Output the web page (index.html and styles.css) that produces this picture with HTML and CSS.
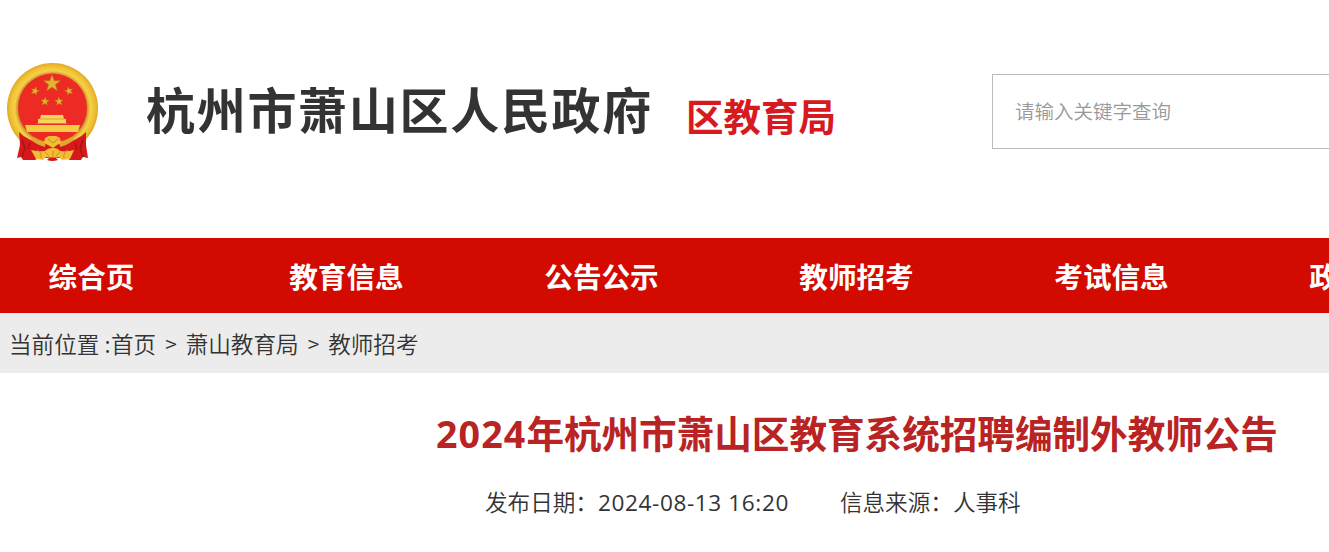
FILE: index.html
```html
<!DOCTYPE html>
<html lang="zh-CN">
<head>
    <meta charset="UTF-8">
    <title>2024年杭州市萧山区教育系统招聘编制外教师公告</title>
    <link rel="stylesheet" href="styles.css">
</head>
<body>

    <div class="header">
        <svg class="emblem" width="94" height="102" viewBox="0 0 94 102">
            <defs>
                <radialGradient id="gold">
                    <stop offset="0.76" stop-color="#c9932a"/>
                    <stop offset="0.83" stop-color="#f7d048"/>
                    <stop offset="0.92" stop-color="#f0c234"/>
                    <stop offset="1" stop-color="#dfaa28"/>
                </radialGradient>
                <path id="star" d="M0-10 2.4-3.1 9.5-3.1 3.8 1.2 5.900 8.100 0 4 -5.900 8.100 -3.8 1.2 -9.5-3.1 -2.4-3.1z"/>
            </defs>
            <circle cx="46.500" cy="46.500" r="45.500" fill="url(#gold)"/>
            <circle cx="46.500" cy="46" r="34.500" fill="#ed2b24"/>
            <g fill="#dfb52d" stroke="#b98322" stroke-width="0.600">
                <use href="#star" transform="translate(46 21.500) scale(.88)"/>
                <use href="#star" transform="translate(29 29) rotate(15) scale(.44)"/>
                <use href="#star" transform="translate(63 29) rotate(-15) scale(.44)"/>
                <use href="#star" transform="translate(39 39.500) rotate(5) scale(.45)"/>
                <use href="#star" transform="translate(53 39.500) rotate(-5) scale(.45)"/>
            </g>
            <path d="M35 53h22l1 4h2v4H32v-4h2z" fill="#f6d35b"/>
            <path d="M19 63h55l-2 7H21z" fill="#f7cb45"/>
            <path d="M33 57h26M31 61.500h30" stroke="#cf9a34" stroke-width="0.800"/>
            <!-- ribbon -->
            <path d="M13 70 Q22 80 38 80 L55 80 Q71 80 80 70 L80 83 82 96 77 95 75 98 64 98 60 96 33 96 29 98 17 98 15 95 11 96 14 83z" fill="#d61a1c"/>
            <path d="M16 78l3 8-3 9M24 81l-2 6M77 78l-3 8 3 9M69 81l2 6" fill="none" stroke="#ab1015" stroke-width="1.500"/>
            <path d="M28 75 Q34 80 40 79 L39 85 Q31 83 25 78zM65 75 Q59 80 53 79 L54 85 Q62 83 68 78z" fill="#e3a52f"/>
            <path d="M39 76l4-2h7l4 2 1 5-4 2-4 3-5-3-4-2z" fill="#f0bd36"/>
            <path d="M25 88q8 2 14 1 3-3 8-3t7 3q7 1 14-1l-4 9-8 1-3-3q-6 1-13 0l-3 3-7-1z" fill="#f3be36"/>
            <path d="M31 88q5 2 4 8M62 88q-5 2-4 8M39 90l4 4M47 88v7M54 90l-4 4M42 77l5 4 5-4" fill="none" stroke="#cf812a" stroke-width="0.900"/>
            <path d="M41 98l2-2h7l2 2q-6 2-11 0z" fill="#d61a1c"/>
        </svg>
        <div class="site-name">杭州市萧山区人民政府</div>
        <div class="dept">区教育局</div>
        <input class="search" type="text" placeholder="请输入关键字查询">
    </div>

    <div class="nav">
        <a class="nav-first">综合页</a>
        <a>教育信息</a>
        <a>公告公示</a>
        <a>教师招考</a>
        <a>考试信息</a>
        <a>政务公开</a>
    </div>

    <div class="crumbs">
        <span class="where">当前位置 :</span><a>首页</a><span class="sep">&gt;</span><a>萧山教育局</a><span class="sep">&gt;</span><a>教师招考</a>
    </div>

    <div class="article">
        <h1><span class="year">2024</span>年杭州市萧山区教育系统招聘编制外教师公告</h1>
        <div class="meta">
            <span>发布日期：<span class="date">2024-08-13 16:20</span></span>
            <span>信息来源：人事科</span>
        </div>
    </div>

</body>
</html>
```

FILE: styles.css
```css
* {
    box-sizing: border-box;
}

body {
    margin: 0;
    overflow: hidden;
    background: #fff;
    color: #333;
    font-family: "Open Sans", "Noto Sans CJK SC", sans-serif;
    white-space: nowrap;
}

.header {
    display: flex;
    align-items: flex-start;
    height: 238px;
    padding-left: 6px;
}

.emblem {
    flex: none;
    margin-top: 62px;
}

.site-name {
    flex: none;
    width: 508px;
    margin: 72px 0 0 46px;
    color: #333;
    font-family: "Noto Sans CJK SC", sans-serif;
    font-size: 49px;
    font-weight: 700;
    line-height: 72px;
    letter-spacing: 1.7px;
}

.dept {
    flex: none;
    width: 150px;
    margin: 88px 0 0 32px;
    color: #d71a20;
    font-family: "Noto Sans CJK SC", sans-serif;
    font-size: 37.5px;
    font-weight: 700;
    line-height: 54px;
}

.search {
    flex: none;
    width: 420px;
    height: 75px;
    margin: 74px 0 0 156px;
    padding: 0 22px 2px;
    border: 1px solid #bbb;
    font-family: "Noto Sans CJK SC", sans-serif;
    font-size: 19.5px;
}

.search::placeholder {
    color: #999;
    font-weight: 350;
}

.nav {
    display: flex;
    height: 75px;
    background: #d20a00;
}

.nav a {
    flex: none;
    width: 255px;
    color: #fff;
    font-size: 28.6px;
    font-weight: 700;
    line-height: 78px;
    text-align: center;
}

.nav .nav-first {
    width: 219px;
    padding-right: 36px;
}

.crumbs {
    display: flex;
    height: 60px;
    padding-left: 9px;
    background: #ececec;
    font-family: "Noto Sans CJK SC", sans-serif;
    font-size: 22.6px;
    font-weight: 350;
    line-height: 61px;
}

.where {
    width: 102px;
}

.sep {
    width: 29.5px;
    text-align: center;
    font-size: 21px;
}

.article {
    width: 1714px;
}

h1 {
    margin: 32px 0 0;
    color: #b92323;
    font-size: 37.6px;
    font-weight: 700;
    line-height: 58px;
    text-align: center;
}

.year {
    letter-spacing: 1.1px;
}

.meta {
    display: flex;
    gap: 51px;
    padding: 22px 0 0 485px;
    font-family: "Noto Sans CJK SC", sans-serif;
    font-size: 22.6px;
    font-weight: 350;
    line-height: 34px;
}

.date {
    font-family: "Open Sans", sans-serif;
    font-weight: 400;
    letter-spacing: 0.6px;
}
```
